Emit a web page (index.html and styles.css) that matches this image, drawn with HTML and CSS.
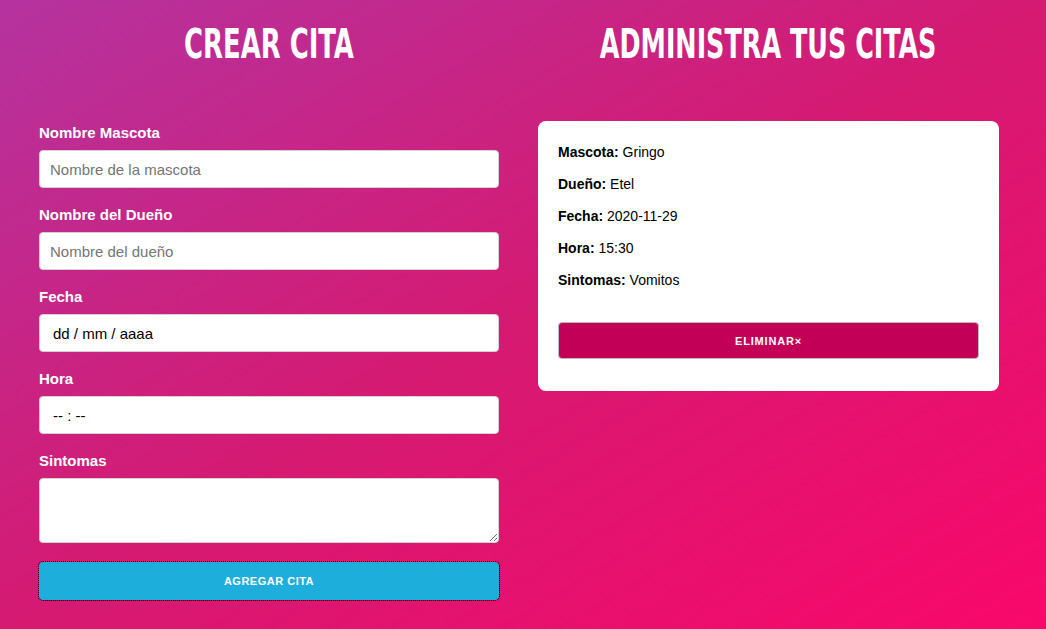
FILE: index.html
```html
<!DOCTYPE html>
<html lang="es">
<head>
<meta charset="utf-8">
<title>Administrador de Pacientes</title>
<link rel="stylesheet" href="styles.css">
</head>
<body>
<div class="container">
  <section class="column">
    <h1 class="title"><span class="title-text">Crear Cita</span></h1>
    <form class="form">
      <label class="label">Nombre Mascota</label>
      <input class="field" type="text" placeholder="Nombre de la mascota">
      <label class="label">Nombre del Dueño</label>
      <input class="field" type="text" placeholder="Nombre del dueño">
      <label class="label">Fecha</label>
      <input class="field field-fake" type="text" value="dd / mm / aaaa">
      <label class="label">Hora</label>
      <input class="field field-fake" type="text" value="-- : --">
      <label class="label">Sintomas</label>
      <textarea class="field area"></textarea>
      <button type="button" class="btn btn-primary">Agregar Cita</button>
    </form>
  </section>
  <section class="column">
    <h1 class="title"><span class="title-text title-wide">Administra tus citas</span></h1>
    <div class="card">
      <p class="row"><strong>Mascota:</strong> Gringo</p>
      <p class="row"><strong>Dueño:</strong> Etel</p>
      <p class="row"><strong>Fecha:</strong> 2020-11-29</p>
      <p class="row"><strong>Hora:</strong> 15:30</p>
      <p class="row"><strong>Sintomas:</strong> Vomitos</p>
      <button type="button" class="btn btn-delete">Eliminar&times;</button>
    </div>
  </section>
</div>
</body>
</html>
```
FILE: styles.css
```css
* { box-sizing: border-box; }
html, body { height: 100%; }
body {
  margin: 0;
  font-family: "Liberation Sans", Arial, sans-serif;
  font-size: 15px;
  color: #222;
  background: linear-gradient(to bottom right, #b5339f, #d51a72 50%, #f9086a);
  overflow: hidden;
}
.container {
  display: grid;
  grid-template-columns: 460px 461px;
  column-gap: 39px;
  padding-left: 39px;
}
.column { display: flex; flex-direction: column; min-width: 0; }
.title {
  display: flex;
  justify-content: center;
  margin: 20px 0 53px;
  font-family: "DejaVu Sans", sans-serif;
  font-stretch: condensed;
  font-weight: 700;
  font-size: 40px;
  line-height: 48px;
  text-transform: uppercase;
  color: #fff;
  white-space: nowrap;
}
.title-text {
  display: inline-block;
  flex: none;
  transform: scaleX(0.72);
  transform-origin: center;
}
.title-wide { transform: scaleX(0.707); }
.form { display: flex; flex-direction: column; }
.label {
  display: block;
  color: #fff;
  font-weight: 700;
  font-size: 15px;
  line-height: 24px;
  margin-bottom: 5px;
}
.field {
  height: 38px;
  padding: 6px 10px;
  border: 1px solid #d1d1d1;
  border-radius: 4px;
  background: #fff;
  font-family: "Liberation Sans", Arial, sans-serif;
  font-size: 15px;
  color: #222;
  margin: 0 0 15px;
  outline: none;
}
.field::placeholder { color: #757575; }
.field-fake { padding-left: 13px; color: #000; }
.area {
  height: 65px;
  min-height: 65px;
  margin-bottom: 19px;
  resize: vertical;
}
.btn {
  height: 38px;
  border-radius: 4px;
  font-family: "Liberation Sans", Arial, sans-serif;
  font-size: 11px;
  font-weight: 700;
  text-transform: uppercase;
  color: #fff;
  cursor: pointer;
  padding: 0 30px;
}
.btn-primary {
  background: #1eaedb;
  border: 1px solid #1eaedb;
  letter-spacing: 0.5px;
  outline: 1px dotted #000;
  outline-offset: 0;
}
.card {
  background: #fff;
  border-radius: 8px;
  padding: 20px 20px 32px;
  display: flex;
  flex-direction: column;
}
.row {
  margin: 0 0 10px;
  font-size: 14px;
  line-height: 22px;
  color: #000;
}
.btn-delete {
  margin-top: 21px;
  height: 37px;
  background: #c20058;
  border: 1px solid #bbb;
  letter-spacing: 0.8px;
}
```
